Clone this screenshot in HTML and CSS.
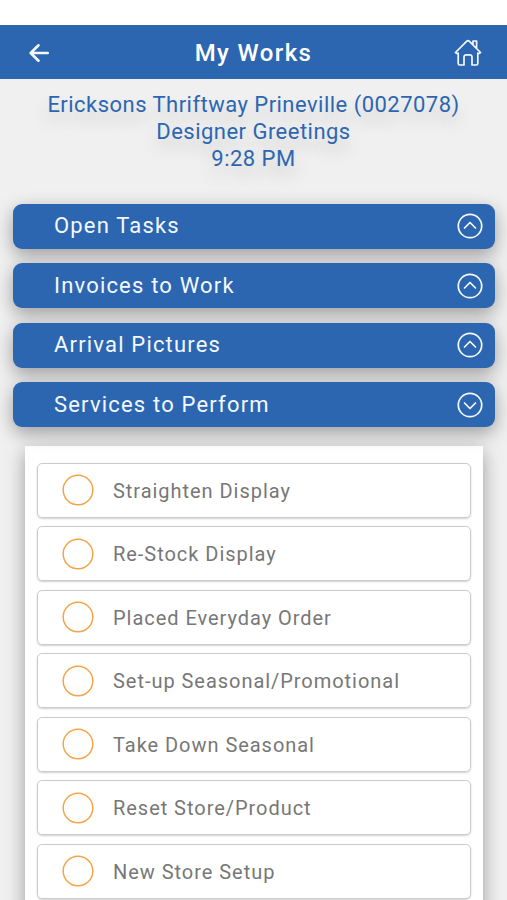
FILE: index.html
```html
<!DOCTYPE html>
<html lang="en">
<head>
<meta charset="utf-8">
<title>My Works</title>
<link rel="stylesheet" href="styles.css">
</head>
<body>
<header class="topbar">
  <svg class="back" viewBox="0 0 20 18" fill="none"><path d="M9.500 1.300 1.700 9l7.800 7.700M2 9h16.800"/></svg>
  <h1 class="title">My Works</h1>
  <svg class="home" viewBox="0 0 28 28" fill="none"><path d="M4.200 14.300V24.400a1.600 1.600 0 0 0 1.600 1.600H10V18a2.200 2.200 0 0 1 2.200-2.200h3.600a2.200 2.200 0 0 1 2.200 2.200v8h4.200a1.600 1.600 0 0 0 1.600-1.600V14.300M1.500 13.500 12.800 2.200a1.700 1.700 0 0 1 2.400 0L26.500 13.500q-1.300 1.500-2.700.6M1.500 13.500q1.300 1.500 2.700.6M19 5.500V2h3.600v7.500"/></svg>
</header>
<section class="visit">
  <p>Ericksons Thriftway Prineville (0027078)</p>
  <p>Designer Greetings</p>
  <p>9:28 PM</p>
</section>
<nav class="sections">
  <div class="bar"><span>Open Tasks</span><svg class="chev" viewBox="0 0 26 26" fill="none"><circle cx="13" cy="13" r="11.700"/><path d="m7.500 15 5.500-5.500 5.500 5.500"/></svg></div>
  <div class="bar"><span>Invoices to Work</span><svg class="chev" viewBox="0 0 26 26" fill="none"><circle cx="13" cy="13" r="11.700"/><path d="m7.500 15 5.500-5.500 5.500 5.500"/></svg></div>
  <div class="bar"><span>Arrival Pictures</span><svg class="chev" viewBox="0 0 26 26" fill="none"><circle cx="13" cy="13" r="11.700"/><path d="m7.500 15 5.500-5.500 5.500 5.500"/></svg></div>
  <div class="bar"><span>Services to Perform</span><svg class="chev" viewBox="0 0 26 26" fill="none"><circle cx="13" cy="13" r="11.700"/><path d="m7.500 11 5.500 5.500 5.500-5.500"/></svg></div>
</nav>
<main class="panel">
  <div class="item"><svg class="radio" viewBox="0 0 32 32"><circle cx="16" cy="16" r="14.800"/></svg><span>Straighten Display</span></div>
  <div class="item"><svg class="radio" viewBox="0 0 32 32"><circle cx="16" cy="16" r="14.800"/></svg><span>Re-Stock Display</span></div>
  <div class="item"><svg class="radio" viewBox="0 0 32 32"><circle cx="16" cy="16" r="14.800"/></svg><span>Placed Everyday Order</span></div>
  <div class="item"><svg class="radio" viewBox="0 0 32 32"><circle cx="16" cy="16" r="14.800"/></svg><span>Set-up Seasonal/Promotional</span></div>
  <div class="item"><svg class="radio" viewBox="0 0 32 32"><circle cx="16" cy="16" r="14.800"/></svg><span>Take Down Seasonal</span></div>
  <div class="item"><svg class="radio" viewBox="0 0 32 32"><circle cx="16" cy="16" r="14.800"/></svg><span>Reset Store/Product</span></div>
  <div class="item"><svg class="radio" viewBox="0 0 32 32"><circle cx="16" cy="16" r="14.800"/></svg><span>New Store Setup</span></div>
</main>
</body>
</html>
```
FILE: styles.css
```css
* { box-sizing: border-box; }
html { background: #f0f0f0; }
body {
  margin: 0;
  height: 900px;
  overflow: hidden;
  border-top: 25px solid #fff;
  font-family: Roboto, "Liberation Sans", sans-serif;
  color: #2c66b1;
}
.topbar {
  display: flex;
  align-items: center;
  justify-content: space-between;
  height: 54px;
  padding: 0 25px 0 29px;
  background: #2c66b1;
}
.topbar svg, .chev {
  stroke: #f4f9ff;
  stroke-linecap: round;
  stroke-linejoin: round;
}
.back { width: 20px; height: 18px; margin-top: 1px; stroke-width: 2.600; }
.home { width: 28px; height: 28px; margin-top: 1px; stroke-width: 1.700; }
.title {
  margin: 1px 0 0 4px;
  font-size: 24px;
  font-weight: 500;
  letter-spacing: 1.400px;
  color: #fff;
}
.visit {
  padding-top: 12px;
  text-align: center;
  font-size: 22px;
  line-height: 27px;
  letter-spacing: .470px;
  text-shadow: 0 10px 18px rgba(0, 0, 0, .2);
}
.visit p { margin: 0; }
.sections {
  display: flex;
  flex-direction: column;
  gap: 14.400px;
  margin: 31.900px 12px 0 13px;
}
.bar {
  display: flex;
  align-items: center;
  justify-content: space-between;
  height: 45px;
  padding: 0 12px 0 41px;
  border-radius: 9px;
  background: #2c66b1;
  box-shadow: 0 6px 18px rgba(0, 0, 0, .35);
  color: #f4f9ff;
  font-size: 22px;
  line-height: 26px;
  letter-spacing: 1.180px;
}
.chev { width: 26px; height: 26px; stroke-width: 1.700; }
.panel {
  display: flex;
  flex-direction: column;
  gap: 8.500px;
  height: 520px;
  margin: 19.300px 24px 0 25px;
  padding: 16.500px 12px;
  background: #fff;
  box-shadow: 0 6px 18px rgba(0, 0, 0, .35);
}
.item {
  display: flex;
  flex: none;
  align-items: center;
  gap: 19px;
  height: 55px;
  padding-left: 24px;
  border: 1px solid #cbcbcb;
  border-radius: 5px;
  box-shadow: 0 1px 2px rgba(0, 0, 0, .18);
  color: #777;
  font-size: 20px;
  letter-spacing: .960px;
}
.item span { padding-top: 1px; }
.radio {
  width: 32px;
  height: 32px;
  fill: none;
  stroke: #f3a448;
  stroke-width: 1.500;
}
```
